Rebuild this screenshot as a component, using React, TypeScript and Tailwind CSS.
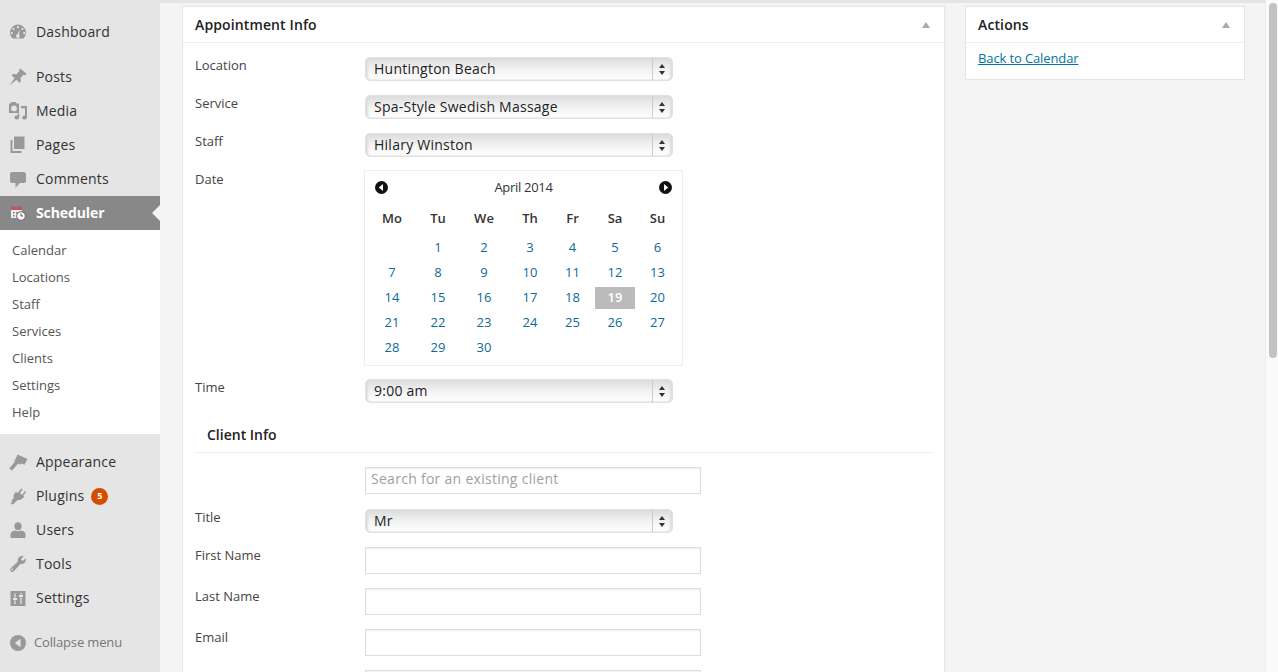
import React from "react";

const G = "#999";

const Dash = () => (
  <svg width="20" height="20" viewBox="0 0 20 20" fill={G}>
    <path fillRule="evenodd" d="M10 2.600a8 8 0 0 0-8 8c0 2.400 1 4.500 2.700 6h10.600a8 8 0 0 0 2.700-6 8 8 0 0 0-8-8zM10 4a1.100 1.100 0 1 1 0 2.200A1.100 1.100 0 0 1 10 4zM5.500 5.900a1.100 1.100 0 1 1 0 2.200 1.100 1.100 0 0 1 0-2.200zM14.500 5.900a1.100 1.100 0 1 1 0 2.200 1.100 1.100 0 0 1 0-2.200zM3.800 10a1.100 1.100 0 1 1 0 2.200 1.100 1.100 0 0 1 0-2.200zM16.200 10a1.100 1.100 0 1 1 0 2.200 1.100 1.100 0 0 1 0-2.200zM12 7.500l-1 5.100a1.800 1.800 0 1 1-1.700-.3z" />
  </svg>
);
const Pin = () => (
  <svg width="20" height="20" viewBox="0 0 20 20" fill={G}>
    <path d="M12.300 1.500l6.300 5.600-1.500 1.300-1.400-.6-3.300 3.200.6 3.400-1.600 1.400-3-3L1.500 18.500l5-7.400-2.900-2.800 1.400-1.600 3.400.7 3.100-3.600-.5-1.100z" />
  </svg>
);
const Media = () => (
  <svg width="20" height="20" viewBox="0 0 20 20" fill={G} fillRule="evenodd">
    <path d="M3 1h4.500l1 1.500h2.500v9.500H1V2.500h2zM6 4.500a2.900 2.900 0 1 0 0 5.800 2.900 2.900 0 0 0 0-5.800z" />
    <path d="M13 5h6v11.500a2.400 2 0 1 1-2-2V7.200h-4z" />
    <ellipse cx="8.800" cy="16.500" rx="2.400" ry="2" />
    <path d="M9.500 12.500h1.700v4h-1.700z" />
  </svg>
);
const Pages = () => (
  <svg width="20" height="20" viewBox="0 0 20 20" fill={G}>
    <path d="M6 1.500h10.500v12.500H6z" />
    <path d="M2.500 5H4.500v11h9v2h-11z" />
  </svg>
);
const Comment = () => (
  <svg width="20" height="20" viewBox="0 0 20 20" fill={G}>
    <path d="M4.500 3h11A2.500 2.500 0 0 1 18 5.500v6a2.500 2.500 0 0 1-2.500 2.500H12l-4.500 4.800V14h-3A2.500 2.500 0 0 1 2 11.500v-6A2.500 2.500 0 0 1 4.500 3z" />
  </svg>
);
const Sched = () => (
  <svg width="16" height="16" viewBox="0 0 16 16">
    <path d="M1 3h11v10H1z" fill="#eee" />
    <path d="M1 1.500h11V5H1z" fill="#c0565a" />
    <path d="M3 7h1.500v1.500H3zM6 7h1.500v1.500H6zM3 10h1.500v1.500H3z" fill="#777" />
    <circle cx="11" cy="11" r="4.300" fill="#fff" stroke="#666" />
    <path d="M11 8.500V11h2" stroke="#555" fill="none" />
  </svg>
);
const Brush = () => (
  <svg width="20" height="20" viewBox="0 0 20 20" fill={G}>
    <path d="M9.500 2.500l10 4.500-3 5.800-3-1.400-.9 1.300-2.300-1.200L4 18.500 1.300 16.500l5.700-7-.9-1.600 1.400-.6z" />
  </svg>
);
const Plug = () => (
  <svg width="20" height="20" viewBox="0 0 20 20" fill={G}>
    <path d="M13.300 2.500l1.300 1-2.700 3.700 2.300 1.600 2.700-3.700 1.200 1-2.800 3.700 1.300 1-1.500 1c-1.500 1.700-3.500 2.600-5.500 2.200L5 18.500l-2.500-1 1.800-1.800-1-1L5.800 12C5.300 10 5.600 8.300 7 7L8 5.800l1.500 1.200z" />
  </svg>
);
const User = () => (
  <svg width="20" height="20" viewBox="0 0 20 20" fill={G}>
    <ellipse cx="10" cy="6.200" rx="3.600" ry="4" />
    <path d="M2.500 18v-3.500c0-2 2-3.700 4.500-4 1.800 1 4.200 1 6 0 2.500.3 4.500 2 4.500 4V18z" />
  </svg>
);
const Wrench = () => (
  <svg width="20" height="20" viewBox="0 0 20 20" fill={G}>
    <path fillRule="evenodd" d="M18 5.500c0 3-2.600 5-5.500 4.400L5.800 17.300a2.200 2.200 0 0 1-3.200-3L9.900 7.500C9.200 4.500 11.200 1.900 14.300 2c.5 0 .9.100 1.300.2L13 5.300l1.700 1.800 3-2.700c.2.300.3.700.3 1.100zM4.100 14.500a.9.900 0 1 0 0 1.800.9.900 0 0 0 0-1.800z" />
  </svg>
);
const Sliders = () => (
  <svg width="20" height="20" viewBox="0 0 20 20">
    <path d="M2.500 3h15v15h-15z" fill={G} />
    <path d="M7 5.500v4M7 12.500v3.500M13 5v1.500M13 9.500V16" stroke="#e5e5e5" strokeWidth="1.300" fill="none" />
    <path d="M5 11h4M11 8h4" stroke="#e5e5e5" strokeWidth="1.800" fill="none" />
  </svg>
);
const CollapseIcon = () => (
  <svg width="16" height="16" viewBox="0 0 16 16">
    <circle cx="8" cy="8" r="8" fill={G} />
    <path d="M10.500 3.800v8.400L4.800 8z" fill="#e5e5e5" />
  </svg>
);

function MenuItem({ icon, label, badge }: { icon: React.ReactNode; label: string; badge?: boolean }) {
  return (
    <div className="h-[34px] flex items-center">
      <div className="w-[36px] pl-[8px] flex items-center">{icon}</div>
      <span className="-mt-[2px] text-[14px] tracking-[0.2px] text-[#333]">{label}</span>
      {badge && (
        <span className="ml-[7px] w-[17px] h-[17px] rounded-full bg-[#d54e00] text-white text-[9px] font-bold flex items-center justify-center">
          5
        </span>
      )}
    </div>
  );
}

function Sidebar() {
  return (
    <aside className="w-[160px] shrink-0 bg-[#e5e5e5] flex flex-col">
      <div className="pt-[15px]">
        <MenuItem icon={<Dash />} label="Dashboard" />
      </div>
      <div className="mt-[11px]">
        <MenuItem icon={<Pin />} label="Posts" />
        <MenuItem icon={<Media />} label="Media" />
        <MenuItem icon={<Pages />} label="Pages" />
        <MenuItem icon={<Comment />} label="Comments" />
      </div>
      <div className="relative h-[34px] bg-[#888] flex items-center">
        <div className="w-[36px] pl-[10px] flex items-center">
          <Sched />
        </div>
        <span className="-mt-[2px] text-[14px] tracking-[-0.1px] font-bold text-white">Scheduler</span>
        <div className="absolute right-0 top-[9px] border-y-[8px] border-r-[8px] border-y-transparent border-r-[#f4f4f4]" />
      </div>
      <div className="bg-white h-[204px] pt-[7px]">
        {["Calendar", "Locations", "Staff", "Services", "Clients", "Settings", "Help"].map((s) => (
          <div key={s} className="h-[27px] pl-[12px] flex items-center text-[13px] text-[#555]">
            {s}
          </div>
        ))}
      </div>
      <div className="mt-[11px]">
        <MenuItem icon={<Brush />} label="Appearance" />
        <MenuItem icon={<Plug />} label="Plugins" badge />
        <MenuItem icon={<User />} label="Users" />
        <MenuItem icon={<Wrench />} label="Tools" />
        <MenuItem icon={<Sliders />} label="Settings" />
      </div>
      <div className="mt-[11px] h-[34px] pl-[10px] flex items-center gap-[8px] text-[13px] tracking-[-0.15px] text-[#777]">
        <CollapseIcon />
        <span>Collapse menu</span>
      </div>
    </aside>
  );
}

function Select({ value }: { value: string }) {
  return (
    <div className="w-[308px] h-[24px] rounded-[5px] border border-[#e0e0e0] bg-gradient-to-b from-[#dcdcdc] via-[#f2f2f2] to-white shadow-[inset_2px_0_2px_#ddd,inset_-2px_0_2px_#ddd] flex items-center text-[14px] tracking-[0.25px] text-[#222]">
      <span className="flex-1 pl-[8px] leading-none">{value}</span>
      <div className="w-[19px] h-full border-l border-[#ccc] flex flex-col items-center justify-center gap-[3px] mr-[1px]">
        <div className="border-x-[3.500px] border-b-[4px] border-x-transparent border-b-[#333]" />
        <div className="border-x-[3.500px] border-t-[4px] border-x-transparent border-t-[#333]" />
      </div>
    </div>
  );
}

function Label({ children }: { children?: React.ReactNode }) {
  return <div className="w-[170px] shrink-0 text-[13px] leading-[16px] text-[#444]">{children}</div>;
}

function Input({ placeholder }: { placeholder?: string }) {
  return (
    <div className="w-[336px] h-[27px] border border-[#ddd] bg-white shadow-[inset_0_1px_2px_rgba(0,0,0,0.07)] pl-[5px] pb-[4px] flex items-center text-[14px] tracking-[0.28px] text-[#a0a0a0]">
      {placeholder}
    </div>
  );
}

const days = [
  "", "1", "2", "3", "4", "5", "6",
  "7", "8", "9", "10", "11", "12", "13",
  "14", "15", "16", "17", "18", "19", "20",
  "21", "22", "23", "24", "25", "26", "27",
  "28", "29", "30",
];

function Arrow({ dir }: { dir: "l" | "r" }) {
  return (
    <svg width="13" height="13" viewBox="0 0 13 13">
      <circle cx="6.500" cy="6.500" r="6.500" fill="#111" />
      <path d={dir === "l" ? "M8 3v7L3.800 6.500z" : "M5 3v7l4.200-3.500z"} fill="#fff" />
    </svg>
  );
}

function Calendar() {
  return (
    <div className="w-[319px] h-[196px] -ml-[1px] border border-[#eee] bg-white px-[1px]">
      <div className="h-[33px] pb-[1px] flex items-center justify-between px-[9px] text-[13px] tracking-[-0.3px] text-[#333]">
        <Arrow dir="l" />
        <span className="mt-[1px]">April 2014</span>
        <Arrow dir="r" />
      </div>
      <div className="grid grid-cols-[52px_40px_52px_40px_45px_40px_45px] text-center">
        {["Mo", "Tu", "We", "Th", "Fr", "Sa", "Su"].map((d) => (
          <div key={d} className="h-[29px] flex items-center justify-center text-[13px] font-semibold text-[#333]">
            {d}
          </div>
        ))}
      </div>
      <div className="grid grid-cols-[52px_40px_52px_40px_45px_40px_45px] auto-rows-[22px] gap-y-[3px] text-center pt-[4px]">
        {days.map((d, i) => (
          <div
            key={i}
            className={
              d === "19"
                ? "flex items-center justify-center text-[13px] font-semibold text-white bg-[#bbb]"
                : "flex items-center justify-center text-[13px] text-[#0a6b99]"
            }
          >
            {d}
          </div>
        ))}
      </div>
    </div>
  );
}

function Caret() {
  return <div className="border-x-[4px] border-b-[6px] border-x-transparent border-b-[#aaa]" />;
}

function PanelHead({ title }: { title: string }) {
  return (
    <div className="h-[36px] border-b border-[#eee] flex items-center justify-between text-[14px] tracking-[0.12px] font-semibold text-[#222]">
      <span className="pl-[12px]">{title}</span>
      <div className="pr-[14px]">
        <Caret />
      </div>
    </div>
  );
}

function Main() {
  return (
    <main className="flex-1 min-w-0 h-full flex flex-col">
      <div className="h-[3px] shrink-0 bg-[#e5e5e5]" />
      <div className="flex-1 bg-[#f4f4f4] flex items-start pl-[22px] pt-[3px] overflow-hidden">
        <section className="w-[763px] shrink-0 h-[800px] border border-[#e5e5e5] bg-white">
          <PanelHead title="Appointment Info" />
          <div className="px-[12px] pt-[14px]">
            <div className="flex h-[38px]">
              <Label>Location</Label>
              <Select value="Huntington Beach" />
            </div>
            <div className="flex h-[38px]">
              <Label>Service</Label>
              <Select value="Spa-Style Swedish Massage" />
            </div>
            <div className="flex h-[37px]">
              <Label>Staff</Label>
              <Select value="Hilary Winston" />
            </div>
            <div className="flex h-[209px]">
              <div className="pt-[1px]">
                <Label>Date</Label>
              </div>
              <Calendar />
            </div>
            <div className="flex h-[41px]">
              <Label>Time</Label>
              <Select value="9:00 am" />
            </div>
            <div className="h-[33px] border-b border-[#eee] pl-[12px] text-[14px] font-semibold text-[#222] leading-[30px]">
              Client Info
            </div>
            <div className="flex mt-[14px] h-[42px]">
              <Label />
              <Input placeholder="Search for an existing client" />
            </div>
            <div className="flex h-[38px]">
              <Label>Title</Label>
              <Select value="Mr" />
            </div>
            <div className="flex h-[41px]">
              <Label>First Name</Label>
              <Input />
            </div>
            <div className="flex h-[41px]">
              <Label>Last Name</Label>
              <Input />
            </div>
            <div className="flex h-[41px]">
              <Label>Email</Label>
              <Input />
            </div>
            <div className="flex h-[41px]">
              <Label />
              <Input />
            </div>
          </div>
        </section>
        <section className="w-[280px] shrink-0 ml-[20px] h-[74px] border border-[#e5e5e5] bg-white">
          <PanelHead title="Actions" />
          <div className="pl-[12px] pt-[6px] text-[13px] tracking-[-0.12px] text-[#0074a2] underline">Back to Calendar</div>
        </section>
      </div>
    </main>
  );
}

export default function App() {
  return (
    <div className="w-[1278px] h-[672px] overflow-hidden flex bg-white [font-family:'Open_Sans',sans-serif]">
      <Sidebar />
      <Main />
      <div className="w-[13px] shrink-0 h-full bg-[#fafafa] border-l border-[#ececec] pl-[3px] pt-[3px]">
        <div className="w-[8px] h-[355px] rounded-full bg-[#c2c2c2]" />
      </div>
    </div>
  );
}
